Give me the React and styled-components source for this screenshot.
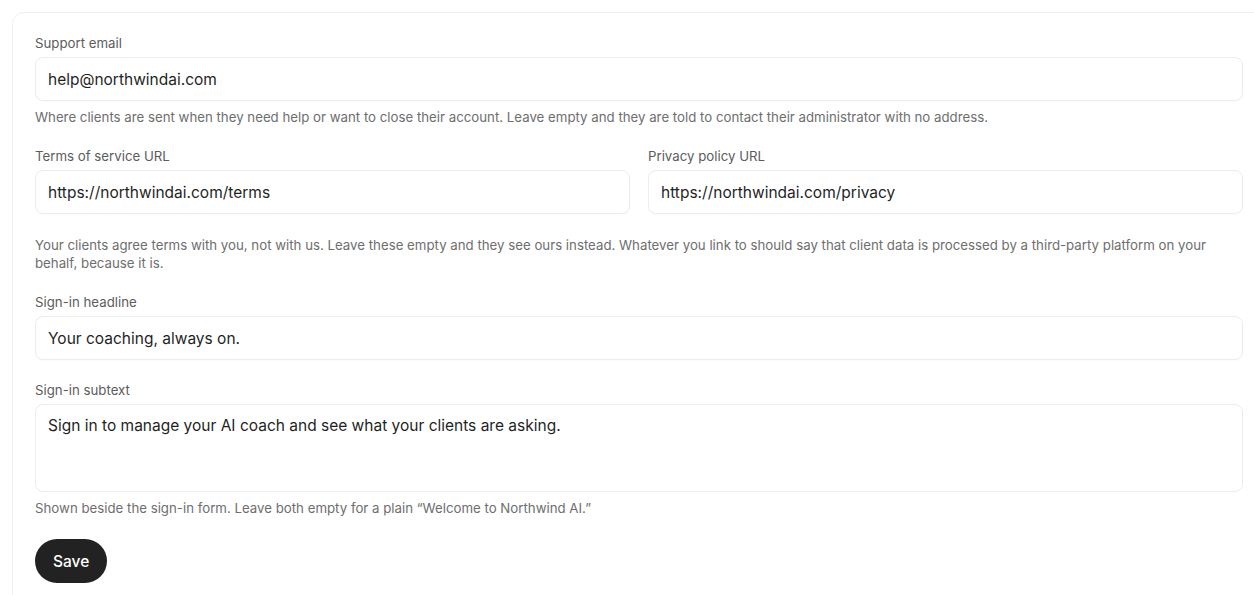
import React, { useState } from 'react';
import styled, { createGlobalStyle } from 'styled-components';

const GlobalStyle = createGlobalStyle`
  html, body {
    margin: 0;
    padding: 0;
    overflow: hidden;
    background: #ffffff;
  }

  body {
    font-family: Inter, "Liberation Sans", sans-serif;
    color: #1f1f1f;
  }
`;

const Page = styled.div`
  padding: 12px 0 0 12px;
`;

const Card = styled.form`
  width: 1254px;
  box-sizing: border-box;
  border: 1px solid #f0f0f0;
  border-radius: 12px;
  padding: 22px 22px 24px;
  display: flex;
  flex-direction: column;
  gap: 22px;
`;

const Field = styled.div`
  display: flex;
  flex-direction: column;
  min-width: 0;
`;

const Row = styled.div`
  display: grid;
  grid-template-columns: 1fr 1fr;
  gap: 18px;
`;

const Label = styled.label`
  font-size: 13.25px;
  line-height: 16px;
  color: #5c5c5c;
  margin-bottom: 6px;
`;

const Input = styled.input`
  box-sizing: border-box;
  height: 44px;
  width: 100%;
  padding: 0 12px;
  border: 1px solid #ededed;
  border-radius: 8px;
  font-family: inherit;
  font-size: 15.5px;
  color: #1f1f1f;
  background: #fff;
  box-shadow: 0 1px 2px rgba(0, 0, 0, 0.02);
  outline: none;
`;

const TextArea = styled.textarea`
  box-sizing: border-box;
  height: 88px;
  width: 100%;
  padding: 11px 12px;
  border: 1px solid #ededed;
  border-radius: 8px;
  font-family: inherit;
  font-size: 15.5px;
  line-height: 20px;
  color: #1f1f1f;
  background: #fff;
  resize: none;
  outline: none;
`;

const Help = styled.p`
  margin: ${(p) => (p.$standalone ? '0' : '7px 0 0')};
  font-size: 13.25px;
  line-height: 18px;
  color: #6e6e6e;
`;

const SaveButton = styled.button`
  align-self: flex-start;
  height: 44px;
  padding: 0 18px;
  border: none;
  border-radius: 22px;
  background: #222222;
  color: #ffffff;
  font-family: inherit;
  font-size: 15.5px;
  font-weight: 500;
  cursor: pointer;
`;

export default function App() {
  const [values, setValues] = useState({
    email: 'help@northwindai.com',
    terms: 'https://northwindai.com/terms',
    privacy: 'https://northwindai.com/privacy',
    headline: 'Your coaching, always on.',
    subtext: 'Sign in to manage your AI coach and see what your clients are asking.',
  });

  const set = (key) => (e) => setValues({ ...values, [key]: e.target.value });

  return (
    <>
      <GlobalStyle />
      <Page>
        <Card onSubmit={(e) => e.preventDefault()}>
          <Field>
            <Label>Support email</Label>
            <Input value={values.email} onChange={set('email')} />
            <Help>
              Where clients are sent when they need help or want to close their account. Leave empty and they are told to contact their administrator with no address.
            </Help>
          </Field>

          <Row>
            <Field>
              <Label>Terms of service URL</Label>
              <Input value={values.terms} onChange={set('terms')} />
            </Field>
            <Field>
              <Label>Privacy policy URL</Label>
              <Input value={values.privacy} onChange={set('privacy')} />
            </Field>
          </Row>

          <Help $standalone>
            Your clients agree terms with you, not with us. Leave these empty and they see ours instead. Whatever you link to should say that client data is processed by a third-party platform on your behalf, because it is.
          </Help>

          <Field>
            <Label>Sign-in headline</Label>
            <Input value={values.headline} onChange={set('headline')} />
          </Field>

          <Field>
            <Label>Sign-in subtext</Label>
            <TextArea value={values.subtext} onChange={set('subtext')} />
            <Help>Shown beside the sign-in form. Leave both empty for a plain “Welcome to Northwind AI.”</Help>
          </Field>

          <SaveButton type="submit">Save</SaveButton>
        </Card>
      </Page>
    </>
  );
}
